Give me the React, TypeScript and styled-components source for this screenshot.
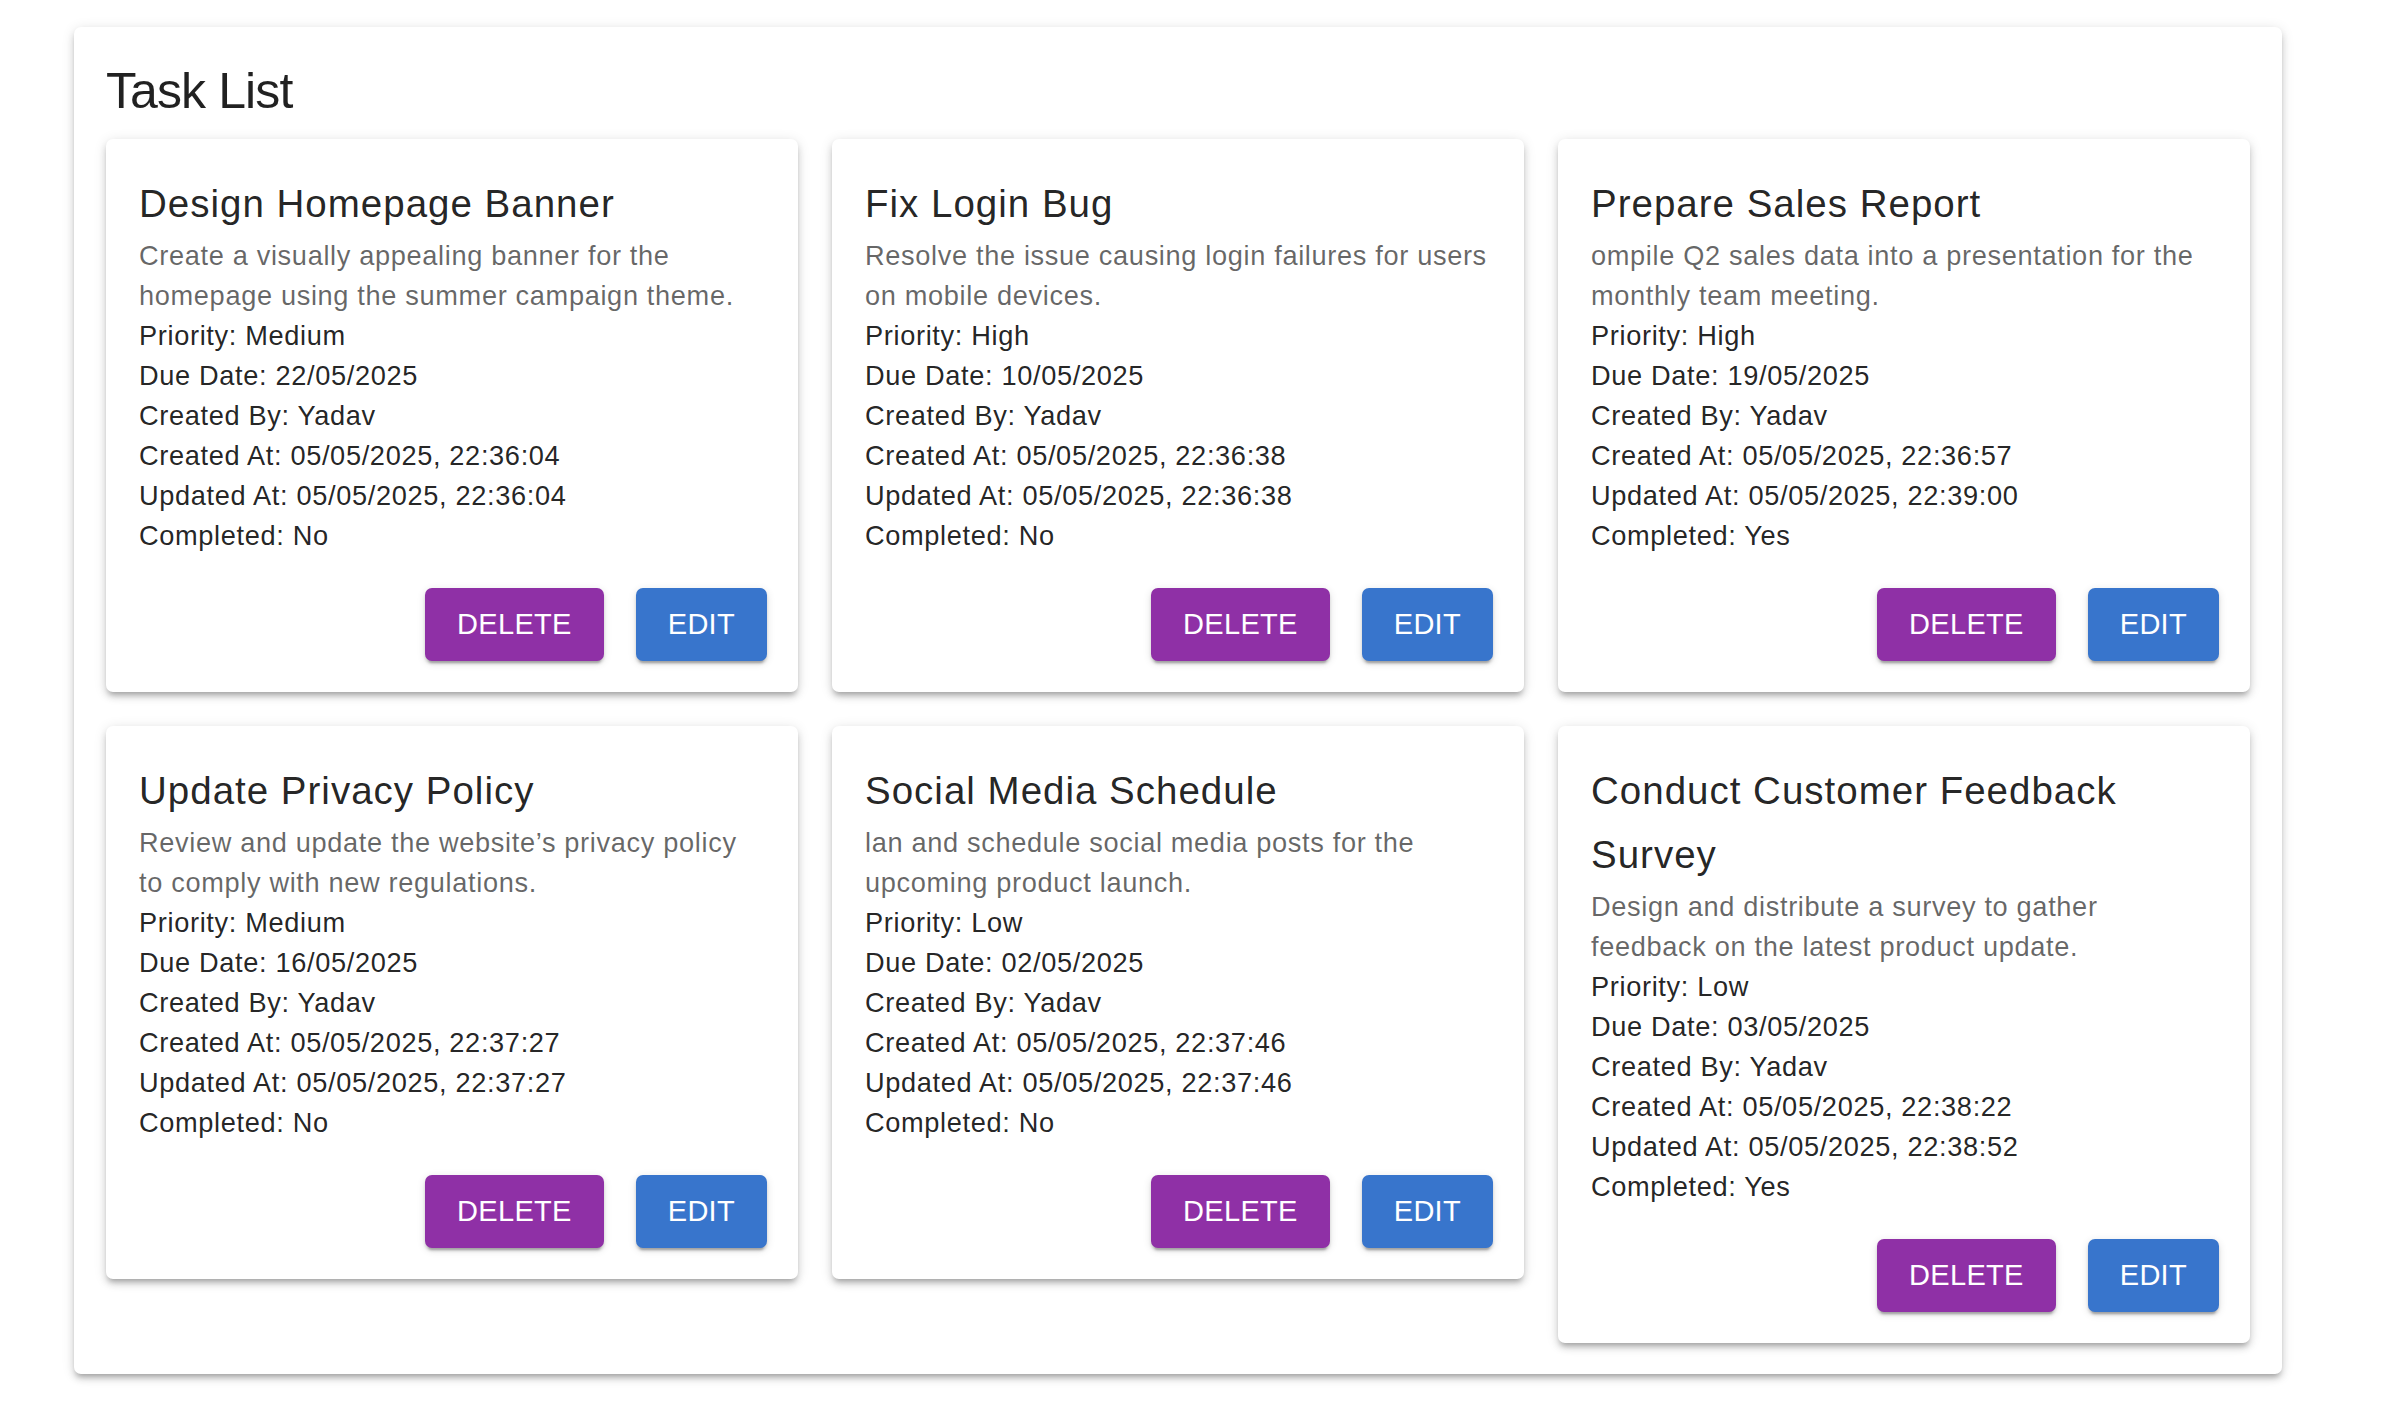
import React from "react";
import styled, { createGlobalStyle } from "styled-components";

const GlobalStyle = createGlobalStyle`
  html, body {
    margin: 0;
    padding: 0;
    background: #ffffff;
  }
  body {
    font-family: "Liberation Sans", Arial, Helvetica, sans-serif;
    color: rgba(0, 0, 0, 0.87);
    -webkit-font-smoothing: antialiased;
  }
  * { box-sizing: border-box; }
`;

const Page = styled.div`
  padding: 27px 108px 49px 74px;
`;

const Paper = styled.section`
  background: #ffffff;
  border-radius: 7px;
  padding: 34px 32px 31px 32px;
  box-shadow: 0 5px 5px -3px rgba(0, 0, 0, 0.2), 0 5px 7px 0 rgba(0, 0, 0, 0.14),
    0 2px 13px 0 rgba(0, 0, 0, 0.12);
`;

const Heading = styled.h1`
  margin: 0 0 18px 0;
  font-size: 50px;
  line-height: 60px;
  font-weight: 400;
  letter-spacing: -0.9px;
  color: rgba(0, 0, 0, 0.87);
`;

const Grid = styled.div`
  display: grid;
  grid-template-columns: repeat(3, 1fr);
  column-gap: 34px;
  row-gap: 34px;
  align-items: start;
`;

const Card = styled.article`
  background: #ffffff;
  border-radius: 7px;
  padding: 33px 31px 31px 33px;
  box-shadow: 0 5px 5px -3px rgba(0, 0, 0, 0.2), 0 5px 7px 0 rgba(0, 0, 0, 0.14),
    0 2px 13px 0 rgba(0, 0, 0, 0.12);
`;

const CardBody = styled.div`
  padding-right: 3px;
`;

const CardTitle = styled.h2`
  margin: 0;
  font-size: 38.5px;
  line-height: 64px;
  font-weight: 400;
  letter-spacing: 1px;
  color: rgba(0, 0, 0, 0.87);
`;

const Text = styled.p<{ $muted?: boolean }>`
  margin: 0;
  font-size: 27.2px;
  line-height: 40px;
  letter-spacing: 0.65px;
  color: ${(p) => (p.$muted ? "rgba(0, 0, 0, 0.6)" : "rgba(0, 0, 0, 0.87)")};
`;

const Actions = styled.div`
  display: flex;
  justify-content: flex-end;
  gap: 32px;
  margin-top: 32px;
`;

const Button = styled.button<{ $tone: "delete" | "edit" }>`
  height: 73px;
  padding: 0 32px;
  border: none;
  border-radius: 7px;
  font-family: "Liberation Sans", Arial, Helvetica, sans-serif;
  font-size: 29px;
  font-weight: 400;
  letter-spacing: 0.3px;
  text-transform: uppercase;
  color: #ffffff;
  cursor: pointer;
  background: ${(p) => (p.$tone === "delete" ? "#8f30a6" : "#3875cc")};
  box-shadow: 0 5px 2px -3px rgba(0, 0, 0, 0.2), 0 3px 3px 0 rgba(0, 0, 0, 0.14),
    0 2px 8px 0 rgba(0, 0, 0, 0.12);
`;

type Task = {
  title: string;
  description: string;
  priority: string;
  due: string;
  createdAt: string;
  updatedAt: string;
  completed: string;
};

const tasks: Task[] = [
  {
    title: "Design Homepage Banner",
    description:
      "Create a visually appealing banner for the homepage using the summer campaign theme.",
    priority: "Medium",
    due: "22/05/2025",
    createdAt: "05/05/2025, 22:36:04",
    updatedAt: "05/05/2025, 22:36:04",
    completed: "No",
  },
  {
    title: "Fix Login Bug",
    description: "Resolve the issue causing login failures for users on mobile devices.",
    priority: "High",
    due: "10/05/2025",
    createdAt: "05/05/2025, 22:36:38",
    updatedAt: "05/05/2025, 22:36:38",
    completed: "No",
  },
  {
    title: "Prepare Sales Report",
    description: "ompile Q2 sales data into a presentation for the monthly team meeting.",
    priority: "High",
    due: "19/05/2025",
    createdAt: "05/05/2025, 22:36:57",
    updatedAt: "05/05/2025, 22:39:00",
    completed: "Yes",
  },
  {
    title: "Update Privacy Policy",
    description: "Review and update the website\u2019s privacy policy to comply with new regulations.",
    priority: "Medium",
    due: "16/05/2025",
    createdAt: "05/05/2025, 22:37:27",
    updatedAt: "05/05/2025, 22:37:27",
    completed: "No",
  },
  {
    title: "Social Media Schedule",
    description: "lan and schedule social media posts for the upcoming product launch.",
    priority: "Low",
    due: "02/05/2025",
    createdAt: "05/05/2025, 22:37:46",
    updatedAt: "05/05/2025, 22:37:46",
    completed: "No",
  },
  {
    title: "Conduct Customer Feedback Survey",
    description: "Design and distribute a survey to gather feedback on the latest product update.",
    priority: "Low",
    due: "03/05/2025",
    createdAt: "05/05/2025, 22:38:22",
    updatedAt: "05/05/2025, 22:38:52",
    completed: "Yes",
  },
];

const TaskCard: React.FC<{ task: Task }> = ({ task }) => (
  <Card>
    <CardBody>
      <CardTitle>{task.title}</CardTitle>
      <Text $muted>{task.description}</Text>
      <Text>Priority: {task.priority}</Text>
      <Text>Due Date: {task.due}</Text>
      <Text>Created By: Yadav</Text>
      <Text>Created At: {task.createdAt}</Text>
      <Text>Updated At: {task.updatedAt}</Text>
      <Text>Completed: {task.completed}</Text>
    </CardBody>
    <Actions>
      <Button $tone="delete">Delete</Button>
      <Button $tone="edit">Edit</Button>
    </Actions>
  </Card>
);

export default function App() {
  return (
    <>
      <GlobalStyle />
      <Page>
        <Paper>
          <Heading>Task List</Heading>
          <Grid>
            {tasks.map((t) => (
              <TaskCard key={t.title} task={t} />
            ))}
          </Grid>
        </Paper>
      </Page>
    </>
  );
}
